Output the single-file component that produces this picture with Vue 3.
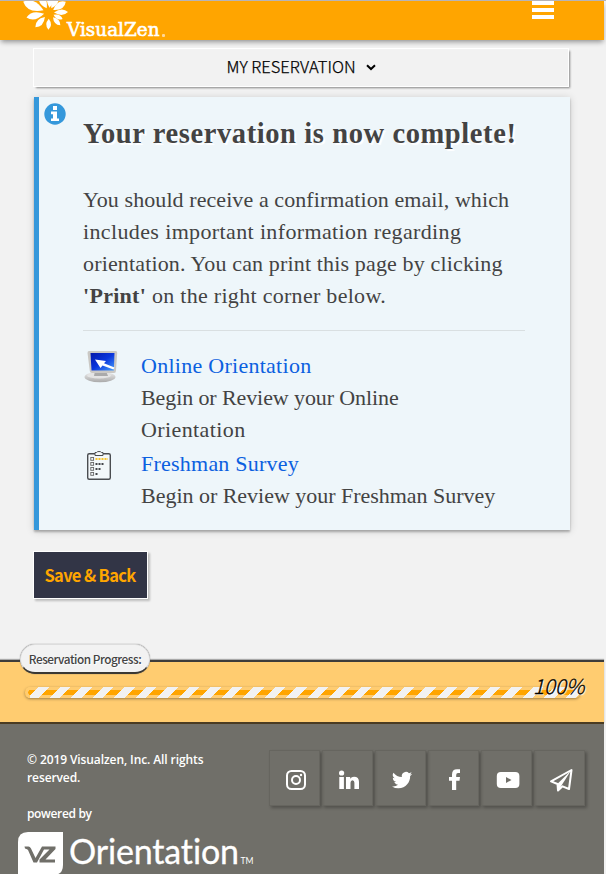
<script setup>
const message = [
  { text: 'You should receive a confirmation email, which', cls: 'l1' },
  { text: 'includes important information regarding', cls: 'l2' },
  { text: 'orientation. You can print this page by clicking', cls: 'l3' },
]
const petals = [
  { a: -157, l: 28, w: 5.4, s: 6 },
  { a: -118, l: 20, w: 4, s: 5 },
  { a: -84, l: 20, w: 4, s: 5 },
  { a: -62, l: 20, w: 3.5, s: 5 },
  { a: -33, l: 20, w: 4, s: 5 },
  { a: -2, l: 19, w: 3.2, s: 5 },
  { a: 25, l: 15, w: 2.6, s: 5 },
  { a: 48, l: 17, w: 2.7, s: 6 },
  { a: 92, l: 17, w: 2.8, s: 6 },
  { a: 133, l: 20, w: 3.5, s: 6 },
  { a: 168, l: 23, w: 4.1, s: 5 },
]
const petalPath = (p) =>
  `M${p.s} 0Q${p.l * 0.7} ${-p.w * 1.7} ${p.l} 0Q${p.l * 0.7} ${p.w * 1.7} ${p.s} 0Z`
const socials = ['instagram', 'linkedin', 'twitter', 'facebook', 'youtube', 'send']
</script>

<template>
  <div class="page">
    <header class="top">
      <svg class="brand" width="180" height="39" viewBox="0 1 180 39">
        <g fill="#fff" transform="translate(49 12.7)">
          <path v-for="p in petals" :key="p.a" :d="petalPath(p)" :transform="`rotate(${p.a})`" />
        </g>
        <text x="67" y="36.3" textLength="92.500" lengthAdjust="spacingAndGlyphs" class="brand-text">VisualZen</text>
        <rect x="162" y="34" width="3" height="3" rx="1" fill="#ffd798" />
      </svg>
      <div class="burger"><i></i><i></i><i></i></div>
    </header>

    <nav class="menu">
      <span>MY RESERVATION</span>
      <svg width="10" height="7" viewBox="0 0 10 7"><path d="M1 1.2L5 5L9 1.2" fill="none" stroke="#000" stroke-width="2" /></svg>
    </nav>

    <section class="card">
      <svg class="info" width="22" height="22" viewBox="0 0 22 22">
        <circle cx="11" cy="11" r="10.7" fill="#3598db" />
        <path d="M9 3h4v4H9zM7 8.6h6v6.8h2V18H7v-2.6h2v-4.2H7z" fill="#fff" />
      </svg>
      <h1>Your reservation is now complete!</h1>
      <div class="copy">
        <div v-for="m in message" :key="m.cls" :class="m.cls">{{ m.text }}</div>
        <div class="l4"><b>'Print'</b> on the right corner below.</div>
      </div>
      <ul class="links">
        <li>
          <svg class="pic" width="36" height="34" viewBox="0 0 36 34">
            <defs>
              <linearGradient id="scr" x1="0" y1="0" x2="1" y2="1">
                <stop offset="0" stop-color="#0618a8" /><stop offset=".5" stop-color="#0a35dc" /><stop offset="1" stop-color="#49a0fa" />
              </linearGradient>
              <linearGradient id="base" x1="0" y1="0" x2="0" y2="1">
                <stop offset="0" stop-color="#eee" /><stop offset="1" stop-color="#aaa" />
              </linearGradient>
            </defs>
            <ellipse cx="17" cy="27" rx="15.5" ry="5.2" fill="url(#base)" />
            <ellipse cx="16" cy="25.500" rx="12" ry="3" fill="#e4e4e4" />
            <path d="M12 21h11l2 5H11z" fill="#aaa" />
            <path d="M6 1L32.500 1Q34.500 1 34.200 3L33 20.500Q33 23 31 23L9 23Q7 23 6.800 21L4.500 3Q4.500 1 6 1Z" fill="#cac8c4" />
            <path d="M7.500 3H31.500L30.800 20.500H8.500Z" fill="url(#scr)" />
            <path d="M12 9.500L23 11L21 13.200L31.500 17.500L30.500 19.500L19.500 15.500L17.500 18Z" fill="#fff" />
          </svg>
          <div class="entry">
            <a class="e1">Online Orientation</a>
            <div class="e2">Begin or Review your Online</div>
            <div class="e3">Orientation</div>
          </div>
        </li>
        <li>
          <svg class="pic" width="36" height="34" viewBox="0 0 36 34">
            <g transform="translate(0 1)">
              <rect x="4.700" y="4.700" width="22.600" height="25.600" rx="1.500" fill="#f3f8fa" stroke="#4a4d50" stroke-width="1.400" />
              <path d="M12 6.500V3.500H13.500Q14 2.500 16 2.500T18.500 3.500H20V6.500Z" fill="#f3f8fa" stroke="#4a4d50" />
              <g fill="none" stroke="#666" stroke-width=".9">
                <rect v-for="n in 4" :key="n" x="7.800" :y="n * 5 + 3.500" width="2.800" height="2.800" />
              </g>
              <g stroke-width="2" stroke-dasharray="2 1">
                <path d="M12.500 10H25" stroke="#f7c52e" />
                <path d="M12.500 15H21M12.500 20H18M12.500 25H15" stroke="#44474a" />
              </g>
            </g>
          </svg>
          <div class="entry">
            <a class="e4">Freshman Survey</a>
            <div class="e5">Begin or Review your Freshman Survey</div>
          </div>
        </li>
      </ul>
    </section>

    <button class="save">Save &amp; Back</button>

    <section class="progress">
      <div class="label">Reservation Progress:</div>
      <div class="track"><div class="fill"></div></div>
      <div class="pct">100%</div>
    </section>

    <footer>
      <div class="legal">
        <div class="c1">© 2019 Visualzen, Inc. All rights</div>
        <div class="c2">reserved.</div>
        <div class="c3">powered by</div>
        <svg class="product" width="240" height="43" viewBox="0 0 240 43">
          <path d="M10 1H45V34Q45 44 35 44H0V11Q0 1 10 1Z" fill="#fff" />
          <path d="M6.500 15.500H10.500Q12 15.500 13 17.500L17.500 27L24 15.500H37.500V18L27.500 28.500H37V31.500H21.500V28.500L31.500 18.600H26L19 31.500H15.500L10 19Q9.500 18 7 17.500Z" fill="#706f69" />
          <text x="51" y="32.500" textLength="170" lengthAdjust="spacing" class="product-text">Orientation</text>
          <text x="222.500" y="32.500" textLength="13" lengthAdjust="spacingAndGlyphs" class="tm">TM</text>
        </svg>
      </div>
      <div class="social">
        <a v-for="s in socials" :key="s">
          <svg width="24" height="24" viewBox="0 0 24 24">
            <g v-if="s === 'instagram'" fill="none" stroke="#fff" stroke-width="2">
              <rect x="3" y="3" width="18" height="18" rx="4.500" /><circle cx="12" cy="12" r="4" /><circle cx="17" cy="7" r="1.200" fill="#fff" stroke="none" />
            </g>
            <g v-else-if="s === 'linkedin'" fill="#fff">
              <circle cx="4.600" cy="5" r="2.600" />
              <path d="M2.300 9H6.900V21H2.300ZM9 9H13.200V10.700Q14.500 8.700 17 8.700Q22 8.700 22 14V21H17.400V14.700Q17.400 12.200 15.500 12.200Q13.500 12.200 13.500 14.700V21H9Z" />
            </g>
            <path v-else-if="s === 'twitter'" fill="#fff" transform="translate(2 2) scale(.84)" d="M24 4.600a10 10 0 0 1-2.800.8 5 5 0 0 0 2.100-2.700 10 10 0 0 1-3.100 1.200 4.900 4.900 0 0 0-8.400 4.500A14 14 0 0 1 1.700 3.200a4.900 4.900 0 0 0 1.500 6.500A5 5 0 0 1 1 9.100a4.900 4.900 0 0 0 3.900 4.900 5 5 0 0 1-2.200.1 4.900 4.900 0 0 0 4.600 3.400A10 10 0 0 1 0 19.500a14 14 0 0 0 7.600 2.200c9 0 14.400-7.700 14-14.600A10 10 0 0 0 24 4.600z" />
            <path v-else-if="s === 'facebook'" fill="#fff" d="M9 22V12.800H6V9H9V6.500Q9 1.300 14 1.300H17V5H15Q13.200 5 13.200 7V9H17L16.500 12.800H13.200V22Z" />
            <g v-else-if="s === 'youtube'">
              <rect x=".8" y="4" width="22.600" height="16" rx="4" fill="#fff" /><path d="M10 9L15.500 12L10 15Z" fill="#706f69" />
            </g>
            <g v-else>
              <path d="M22.500 2L20 21L13.500 18.300L9 22.500L8.500 16L2 13.400Z" fill="none" stroke="#fff" stroke-width="2" stroke-linejoin="round" />
              <path d="M22 2.500L8.300 16L9 23L12.500 17.500Z" fill="#fff" />
            </g>
          </svg>
        </a>
      </div>
    </footer>
  </div>
</template>

<style>
body { background: #f2f2f2; overflow: hidden; }
</style>

<style scoped>
* { box-sizing: border-box; }
.page { width: 606px; height: 874px; overflow: hidden; border-top: 1px solid #b7b4b7; background: #f2f2f2; color: #434343; display: flex; flex-direction: column; align-items: flex-start; }
.top { width: 604px; height: 39px; flex: none; background: #ffa500; box-shadow: 0 3px 5px -1px rgba(0,0,0,.4); display: flex; justify-content: space-between; padding-right: 50px; }
.brand { display: block; }
.brand-text { font: 400 18.500px "DejaVu Serif", serif; fill: #fff; stroke: #fff; stroke-width: .6px; }
.burger { width: 22px; display: flex; flex-direction: column; gap: 3px; }
.burger i { height: 4px; background: #fff; }
.menu { width: 536px; height: 39px; flex: none; margin: 8px 0 0 33px; border: 1px solid #fff; box-shadow: 2px 2px 2px -1px rgba(0,0,0,.45); display: flex; align-items: center; justify-content: center; gap: 10px; font: 300 16.500px "Noto Sans CJK SC", sans-serif; color: #000; padding: 0 0 3px 0; -webkit-text-stroke: .25px #000; }
.menu svg { margin-top: 3px; }
.card { position: relative; flex: none; width: 536px; height: 433px; margin: 10px 0 0 34px; background: #eef6fa; border-left: 5px solid #3598db; box-shadow: 0 2px 2px rgba(0,0,0,.25), 0 1px 8px rgba(0,0,0,.16); padding: 21px 45px 0 44px; font: 22px/32px "Liberation Serif", serif; white-space: nowrap; }
.info { position: absolute; left: 5px; top: 6px; }
h1 { margin: 0; font-size: 28.500px; line-height: 32px; font-weight: 700; text-shadow: 2px 2px 1px #fff; letter-spacing: .6px; }
.copy { padding: 34px 0 18px; border-bottom: 1px solid #d9dfe1; }
.l1 { letter-spacing: .08px; }
.l2 { letter-spacing: .37px; }
.l3 { letter-spacing: .15px; }
.l4 { letter-spacing: .29px; }
.links { list-style: none; margin: 0; padding: 19px 0 0; }
li { display: flex; }
li + li { margin-top: 2px; }
.pic { flex: none; margin: 0 22px 0 0; }
a { color: #0b60e0; }
.entry a { display: block; }
.e1 { letter-spacing: .27px; }
.e2 { letter-spacing: -.1px; }
.e3 { letter-spacing: .4px; }
.e4 { letter-spacing: .23px; }
.e5 { letter-spacing: -.02px; }
.save { flex: none; width: 115px; height: 48px; margin: 21px 0 0 33px; padding: 0 1px 0 0; border: 1px solid #fff; background: #323546; color: #ffa500; font: 700 16.500px "Noto Sans CJK SC", sans-serif; letter-spacing: -.65px; box-shadow: 2px 2px 2px rgba(0,0,0,.22); white-space: nowrap; }
.progress { position: relative; flex: none; width: 604px; height: 64px; margin-top: 61px; background: #ffcc70; border-top: 2px solid #3d3c3b; border-bottom: 2px solid #4a3b22; box-shadow: 0 -1px 1px rgba(0,0,0,.3); padding: 25px 24px 0 25px; }
.label { position: absolute; left: 20px; top: -18px; width: 130px; height: 30px; border: 1px solid #ddd; border-bottom: 2px solid #3a3833; border-radius: 15px; background: #f2f2f2; font: 500 11.800px/27px "Noto Sans CJK SC", sans-serif; text-align: center; letter-spacing: -.48px; text-shadow: 1px 1px 1px #fff; white-space: nowrap; box-shadow: 0 0 1px #555; }
.track { height: 11px; border-radius: 6px; background: #ffcc70; box-shadow: 0 1px 3px rgba(0,0,0,.4); overflow: hidden; }
.fill { height: 11px; background: radial-gradient(circle at 6px 5.500px, #ffa500 2.500px, #ffcc70 3px) 0 0 / 6px 11px no-repeat, linear-gradient(#ffcc70 0 3px, #ffa500 3px 8px, #ffcc70 8px); }
.fill::after { content: ""; display: block; height: 11px; background: repeating-linear-gradient(135deg, #f2f2f2 -5.500px 2.100px, transparent 2.100px 9.700px); clip-path: inset(0 0 0 5px); }
.pct { position: absolute; left: 533px; top: 8px; font: italic 300 20.500px/30px "Noto Sans CJK SC", sans-serif; color: #000; text-shadow: 1px 1px 1px #fff; -webkit-text-stroke: .3px #000; }
footer { width: 604px; height: 152px; flex: none; background: #706f69; display: flex; justify-content: space-between; color: #fff; }
.legal { width: 240px; padding: 27px 0 0 18px; font: 600 12px/18px "Open Sans", sans-serif; white-space: nowrap; letter-spacing: -.1px; }
.c1, .c2, .c3 { padding-left: 9px; }
.c3 { margin-top: 18px; letter-spacing: -.35px; }
.product { display: block; margin-top: 8px; overflow: visible; letter-spacing: 0; }
.product-text { font: 400 34px Lato, sans-serif; fill: #fff; font-variant-ligatures: none; stroke: #fff; stroke-width: .3px; }
.tm { font: 400 9px Lato, sans-serif; fill: #fff; }
.social { display: flex; gap: 2px; padding: 26px 19px 0 0; }
.social a { width: 51px; height: 56px; border: 1px solid #66655f; box-shadow: 2px 2px 3px rgba(0,0,0,.27); display: flex; align-items: center; justify-content: center; padding: 3px 0 0 2px; }
</style>
